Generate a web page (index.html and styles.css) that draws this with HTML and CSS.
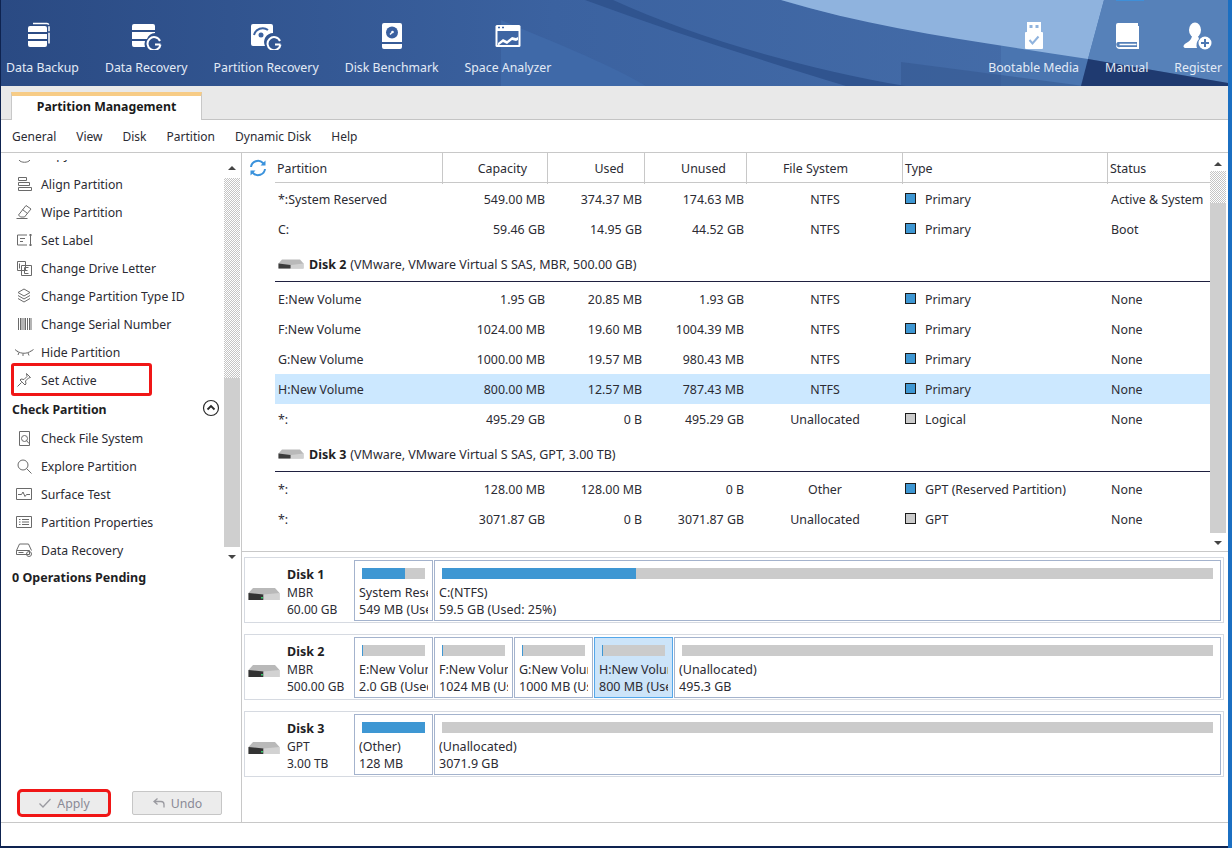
FILE: index.html
```html
<!DOCTYPE html>
<html lang="en">
<head>
<meta charset="utf-8">
<title>Partition Management</title>
<link rel="stylesheet" href="styles.css">
</head>
<body>
<div class="window">
  <header class="topbar">
    <svg class="topbar-bg" viewBox="0 0 1227 86" preserveAspectRatio="none" aria-hidden="true">
      <defs>
        <linearGradient id="hg" x1="0" y1="0" x2="1" y2="0">
          <stop offset="0" stop-color="#2a4a83"/>
          <stop offset="0.45" stop-color="#3b62a0"/>
          <stop offset="1" stop-color="#4870ab"/>
        </linearGradient>
      </defs>
      <rect width="1227" height="86" fill="url(#hg)"/>
      <path d="M500 20 C560 45 610 65 645 86 L500 86Z" fill="#3f69a8"/>
      <path d="M584 0 L612 0 C690 36 800 68 905 86 L845 86 C760 60 670 32 584 0Z" fill="#30548f"/>
      <path d="M780 0 L1105 0 L1080 86 L1000 86 L1000 42 C920 28 850 22 780 0Z" fill="#4a75b0"/>
      <path d="M780 0 L1103 0 L1087 59 C980 42 880 30 780 0Z" fill="#8fb3de"/>
      <path d="M900 62 L1083 86 L900 86Z" fill="#35578f" opacity=".55"/>
      <path d="M1103 0 L1227 0 L1227 83 L1087 59Z" fill="#5681b9"/>
      <path d="M1087 59 L1227 83 L1227 86 L1080 86Z" fill="#1f3a70"/>
      <rect x="1115" width="28" height="1" fill="#3f8fd8"/>
    </svg>
    <nav class="tools">
      <a class="tool">
        <svg class="tool-icon" viewBox="0 0 32 28"><path d="M7 1.500h14a2 2 0 0 1 2 2v18" fill="none" stroke="#fff" stroke-width="1.500" stroke-dasharray="16 1.500 5 1.500"/><path d="M4 4h15a2 2 0 0 1 2 2v4H2V6a2 2 0 0 1 2-2zM2 12h19v5H2zM2 19h19v4a2 2 0 0 1-2 2H4a2 2 0 0 1-2-2z" fill="#fff"/></svg>
        <span>Data Backup</span>
      </a>
      <a class="tool">
        <svg class="tool-icon" viewBox="0 0 32 28"><path d="M4 2h19a2 2 0 0 1 2 2v4H2V4a2 2 0 0 1 2-2zM2 10h23v1a9 9 0 0 0-8 6H2zM2 19h13a9 9 0 0 0 0 6H4a2 2 0 0 1-2-2z" fill="#fff"/><path d="M30 19a6.500 6.500 0 1 0 .5 3.500M25 22.500h5.500" fill="none" stroke="#fff" stroke-width="2"/></svg>
        <span>Data Recovery</span>
      </a>
      <a class="tool">
        <svg class="tool-icon" viewBox="0 0 32 28"><path d="M3 2h18a2 2 0 0 1 2 2v7a9 9 0 0 0-8 13H3a2 2 0 0 1-2-2V4a2 2 0 0 1 2-2z" fill="#fff"/><path d="M4 13a9 9 0 0 1 14-5" fill="none" stroke="#3c62a0" stroke-width="2"/><circle cx="11" cy="13" r="2.500" fill="#3c62a0"/><path d="M30 19a6.500 6.500 0 1 0 .5 3.500M25 22.500h5.500" fill="none" stroke="#fff" stroke-width="2"/></svg>
        <span>Partition Recovery</span>
      </a>
      <a class="tool">
        <svg class="tool-icon" viewBox="0 0 32 28"><path d="M8 1h16a2 2 0 0 1 2 2v17H6V3a2 2 0 0 1 2-2zM6 22h20v3a2 2 0 0 1-2 2H8a2 2 0 0 1-2-2z" fill="#fff"/><circle cx="16" cy="10.500" r="6" fill="#3a60a0"/><path d="M16 10.500l-2 2" stroke="#fff" stroke-width="1.500"/><circle cx="16.500" cy="10" r="1.300" fill="#fff"/></svg>
        <span>Disk Benchmark</span>
      </a>
      <a class="tool">
        <svg class="tool-icon" viewBox="0 0 32 28"><rect x="3.500" y="3" width="25" height="22" rx="1.500" fill="#fff"/><rect x="5.500" y="9" width="21" height="14" fill="#3e65a3"/><path d="M6 5.500h2M10 5.500h2" stroke="#3e65a3" stroke-width="1.500"/><path d="M6 21l5-4 4 2 5-4 4 1 2-1v3l-2 1-4-1-5 4-4-2-4 3H6z" fill="#fff"/></svg>
        <span>Space Analyzer</span>
      </a>
      <span class="tools-gap"></span>
      <a class="tool">
        <svg class="tool-icon" viewBox="0 0 32 28"><path d="M9 0h14v10h-14z" fill="#fff"/><rect x="11.500" y="3" width="3" height="3" fill="#8fb3de"/><rect x="17.500" y="3" width="3" height="3" fill="#8fb3de"/><path d="M8 10h16a1 1 0 0 1 1 1v15a1 1 0 0 1-1 1H8a1 1 0 0 1-1-1V11a1 1 0 0 1 1-1z" fill="#fff"/><path d="M11.500 18l3 3.500 6-7" fill="none" stroke="#8fb3de" stroke-width="2"/></svg>
        <span>Bootable Media</span>
      </a>
      <a class="tool">
        <svg class="tool-icon" viewBox="0 0 32 28"><path d="M7 1h20v3h1v23H9a4 4 0 0 1-4-4V3a2 2 0 0 1 2-2z" fill="#fff"/><path d="M7 20h19v5H9a2.500 2.500 0 0 1-2-5z" fill="#5681b9"/><path d="M8.500 22.500h17" stroke="#fff" stroke-width="1.500"/></svg>
        <span>Manual</span>
      </a>
      <a class="tool">
        <svg class="tool-icon" viewBox="0 0 32 28"><ellipse cx="13" cy="8" rx="6" ry="7.500" fill="#fff"/><path d="M10 14h6l1 3a9 9 0 0 0-2 9H3a2 2 0 0 1-1-3c2-3 7-3 8-9z" fill="#fff"/><circle cx="23" cy="21" r="6.500" fill="#fff"/><path d="M23 17v8M19 21h8" stroke="#4d78b2" stroke-width="2"/></svg>
        <span>Register</span>
      </a>
    </nav>
  </header>

  <div class="tabbar"><div class="tab">Partition Management</div></div>

  <nav class="menubar">
    <span>General</span><span>View</span><span>Disk</span><span>Partition</span><span>Dynamic Disk</span><span>Help</span>
  </nav>

  <div class="workspace">
    <aside class="sidebar">
      <div class="side-scroll">
        <div class="side-list">
          <div class="side-item side-item-first"><svg class="side-icon" viewBox="0 0 18 18"><path d="M4 14c2 3 9 3 11 0" class="ln"/></svg><span>Copy Partition</span></div>
          <div class="side-item"><svg class="side-icon" viewBox="0 0 18 18"><path d="M3.500 2.500h8v3h-8zM3.500 7.500h11v3h-11zM3.500 12.500h13v3h-13z" class="ln"/></svg><span>Align Partition</span></div>
          <div class="side-item"><svg class="side-icon" viewBox="0 0 18 18"><path d="M11 2.500l5 3.500-6.500 8H5.500l-2-2zM7.500 6.500l5 4M1.500 15.500h11" class="ln"/></svg><span>Wipe Partition</span></div>
          <div class="side-item"><svg class="side-icon" viewBox="0 0 18 18"><path d="M12 4H2.500v10H12M14 4h3M14 14h3M15.500 3v12M5 7.500h5M5 10.500h3" class="ln"/></svg><span>Set Label</span></div>
          <div class="side-item"><svg class="side-icon" viewBox="0 0 18 18"><path d="M2.500 2.500h8v9h-8zM6.500 6.500h10v10h-10z" class="ln" /><path d="M9.500 8.500h4M9.500 11.500h3M9.500 14.500h4M9.500 8.500v6M4.500 4.500v5" class="ln"/></svg><span>Change Drive Letter</span></div>
          <div class="side-item"><svg class="side-icon" viewBox="0 0 18 18"><path d="M9 2l6 3.500-6 3.500-6-3.500zM3 8.500l6 3.500 6-3.500M3 11.500l6 3.500 6-3.500" class="ln"/></svg><span>Change Partition Type ID</span></div>
          <div class="side-item"><svg class="side-icon" viewBox="0 0 18 18"><path d="M3.500 3v12M5.500 3v12M7 3v12M9 3v12M10.500 3v12M12.500 3v12M14.500 3v12M16 3v12" class="ln"/></svg><span>Change Serial Number</span></div>
          <div class="side-item"><svg class="side-icon side-icon-wide" viewBox="0 0 20 18"><path d="M3 8c4 3 10 3 14 0M1 6.500l3 2.500M5 9.500l-1 2.500M9 10.500v2.500M14 10l1 2.500M16.500 8.500l3-2" class="ln"/></svg><span>Hide Partition</span></div>
          <div class="side-item side-item-marked"><span class="red-mark"></span><svg class="side-icon" viewBox="0 0 18 18"><path d="M11.500 2.500l4 4-2 .5-3 3 .5 3-1 1-5-5 1-1 3 .5 3-3zM6.500 11.500l-4 4" class="ln"/></svg><span>Set Active</span></div>
          <div class="side-head"><span>Check Partition</span><svg class="chev" viewBox="0 0 18 18"><circle cx="9" cy="9" r="7.500" fill="none" stroke="#2a2a2a" stroke-width="1.200"/><path d="M5.500 10.500L9 7l3.500 3.500" fill="none" stroke="#2a2a2a" stroke-width="1.800"/></svg></div>
          <div class="side-item"><svg class="side-icon" viewBox="0 0 18 18"><path d="M4.500 2.500h10v14h-10z" class="ln"/><circle cx="9.500" cy="9.500" r="3" class="ln"/><path d="M11.500 11.500l2.500 3" class="ln"/></svg><span>Check File System</span></div>
          <div class="side-item"><svg class="side-icon" viewBox="0 0 18 18"><circle cx="8" cy="8" r="5" class="ln"/><path d="M11.500 11.500l5 5" class="ln"/></svg><span>Explore Partition</span></div>
          <div class="side-item"><svg class="side-icon" viewBox="0 0 18 18"><path d="M1.500 3.500h15v11h-15zM3 9.500h3.500l1.500-2.500 2 4.500 1.500-2h3.500" class="ln"/></svg><span>Surface Test</span></div>
          <div class="side-item"><svg class="side-icon" viewBox="0 0 18 18"><path d="M1.500 3.500h15v11h-15zM4 6.500h1.500M4 9h1.500M4 11.500h1.500M7 6.500h7M7 9h7M7 11.500h7" class="ln"/></svg><span>Partition Properties</span></div>
          <div class="side-item"><svg class="side-icon" viewBox="0 0 18 18"><path d="M1.500 9.500l3-6.500h9l3 6.500M1.500 9.500h13v4h-13zM3.500 11.500h5" class="ln"/><circle cx="14" cy="13" r="2.500" class="ln"/></svg><span>Data Recovery</span></div>
        </div>
        <div class="scrollbar scrollbar-side">
          <span class="arrow arrow-up"></span>
          <span class="hatch hatch-side"></span>
          <span class="thumb"></span>
          <span class="arrow arrow-down"></span>
        </div>
      </div>
      <div class="side-foot">0 Operations Pending</div>
      <div class="actions">
        <button class="action action-apply" type="button"><svg class="action-icon" viewBox="0 0 14 12"><path d="M1.500 6.500l3.500 3.500 7.500-8" fill="none" stroke="#9a9aa0" stroke-width="1.300"/></svg>Apply</button>
        <button class="action" type="button"><svg class="action-icon" viewBox="0 0 14 12"><path d="M5.500 1.500l-3.500 3 3.500 3M2 4.500h7a3 3 0 0 1 3 3v3" fill="none" stroke="#9a9aa0" stroke-width="1.300"/></svg>Undo</button>
      </div>
    </aside>

    <main class="content">
      <section class="table-area">
        <div class="refresh"><svg viewBox="0 0 18 18" class="refresh-icon"><path d="M2 8a7 7 0 0 1 12-4l1.500 1.500M16 10a7 7 0 0 1-12 4l-1.500-1.500" fill="none" stroke="#3a92dc" stroke-width="2"/><path d="M16.500 1.500v5h-5zM1.500 16.500v-5h5z" fill="#3a92dc"/></svg></div>
        <div class="table">
          <div class="row row-head">
            <div class="th">Partition</div><div class="th th-num">Capacity</div><div class="th th-num">Used</div><div class="th th-num">Unused</div><div class="th th-mid">File System</div><div class="th th-type">Type</div><div class="th th-status">Status</div>
          </div>
          <div class="row row-first"><div class="td td-name">*:System Reserved</div><div class="td num">549.00 MB</div><div class="td num">374.37 MB</div><div class="td num">174.63 MB</div><div class="td mid">NTFS</div><div class="td type"><i class="swatch"></i>Primary</div><div class="td status">Active &amp; System</div></div>
          <div class="row"><div class="td td-name">C:</div><div class="td num">59.46 GB</div><div class="td num">14.95 GB</div><div class="td num">44.52 GB</div><div class="td mid">NTFS</div><div class="td type"><i class="swatch"></i>Primary</div><div class="td status">Boot</div></div>
          <div class="disk-row"><svg class="hdd-small" viewBox="0 0 26 12"><path d="M4 1.500h18l3.500 4v5H.5v-5z" fill="#b9b9b9"/><path d="M.5 5.500l12 1.500v3.500H.5z" fill="#3c3c3c"/><path d="M13 7l12.500-1.500v5H13z" fill="#d0d0d0"/></svg><b>Disk 2</b><span>(VMware, VMware Virtual S SAS, MBR, 500.00 GB)</span></div>
          <div class="row"><div class="td td-name">E:New Volume</div><div class="td num">1.95 GB</div><div class="td num">20.85 MB</div><div class="td num">1.93 GB</div><div class="td mid">NTFS</div><div class="td type"><i class="swatch"></i>Primary</div><div class="td status">None</div></div>
          <div class="row"><div class="td td-name">F:New Volume</div><div class="td num">1024.00 MB</div><div class="td num">19.60 MB</div><div class="td num">1004.39 MB</div><div class="td mid">NTFS</div><div class="td type"><i class="swatch"></i>Primary</div><div class="td status">None</div></div>
          <div class="row"><div class="td td-name">G:New Volume</div><div class="td num">1000.00 MB</div><div class="td num">19.57 MB</div><div class="td num">980.43 MB</div><div class="td mid">NTFS</div><div class="td type"><i class="swatch"></i>Primary</div><div class="td status">None</div></div>
          <div class="row row-selected"><div class="td td-name">H:New Volume</div><div class="td num">800.00 MB</div><div class="td num">12.57 MB</div><div class="td num">787.43 MB</div><div class="td mid">NTFS</div><div class="td type"><i class="swatch"></i>Primary</div><div class="td status">None</div></div>
          <div class="row"><div class="td td-name">*:</div><div class="td num">495.29 GB</div><div class="td num">0 B</div><div class="td num">495.29 GB</div><div class="td mid">Unallocated</div><div class="td type"><i class="swatch swatch-gray"></i>Logical</div><div class="td status">None</div></div>
          <div class="disk-row"><svg class="hdd-small" viewBox="0 0 26 12"><path d="M4 1.500h18l3.500 4v5H.5v-5z" fill="#b9b9b9"/><path d="M.5 5.500l12 1.500v3.500H.5z" fill="#3c3c3c"/><path d="M13 7l12.500-1.500v5H13z" fill="#d0d0d0"/></svg><b>Disk 3</b><span>(VMware, VMware Virtual S SAS, GPT, 3.00 TB)</span></div>
          <div class="row"><div class="td td-name">*:</div><div class="td num">128.00 MB</div><div class="td num">128.00 MB</div><div class="td num">0 B</div><div class="td mid">Other</div><div class="td type"><i class="swatch"></i>GPT (Reserved Partition)</div><div class="td status">None</div></div>
          <div class="row"><div class="td td-name">*:</div><div class="td num">3071.87 GB</div><div class="td num">0 B</div><div class="td num">3071.87 GB</div><div class="td mid">Unallocated</div><div class="td type"><i class="swatch swatch-gray"></i>GPT</div><div class="td status">None</div></div>
        </div>
        <div class="scrollbar scrollbar-table">
          <span class="arrow arrow-up"></span>
          <span class="hatch hatch-table"></span>
          <span class="thumb"></span>
          <span class="arrow arrow-down"></span>
        </div>
      </section>

      <section class="map">
        <div class="disk-card">
          <div class="disk-info"><svg class="hdd" viewBox="0 0 32 14"><path d="M5 1h22l4.500 5v7H.5V6z" fill="#b9b9b9"/><path d="M.5 6l15 1.500V13H.5z" fill="#333"/><path d="M15.500 7.500L31.500 6v7h-16z" fill="#d2d2d2"/><rect x="13" y="10" width="2" height="1.500" fill="#35c46a"/></svg><div class="disk-text"><b>Disk 1</b><span>MBR</span><span>60.00 GB</span></div></div>
          <div class="part part-s"><div class="bar"><i class="fill fill-23"></i></div><p>System Reserved</p><p>549 MB (Used: 68%)</p></div>
          <div class="part part-grow part-c"><div class="bar"><i class="fill fill-25"></i></div><p>C:(NTFS)</p><p>59.5 GB (Used: 25%)</p></div>
        </div>
        <div class="disk-card">
          <div class="disk-info"><svg class="hdd" viewBox="0 0 32 14"><path d="M5 1h22l4.500 5v7H.5V6z" fill="#b9b9b9"/><path d="M.5 6l15 1.500V13H.5z" fill="#333"/><path d="M15.500 7.500L31.500 6v7h-16z" fill="#d2d2d2"/><rect x="13" y="10" width="2" height="1.500" fill="#35c46a"/></svg><div class="disk-text"><b>Disk 2</b><span>MBR</span><span>500.00 GB</span></div></div>
          <div class="part part-s"><div class="bar"><i class="fill fill-1"></i></div><p>E:New Volume</p><p>2.0 GB (Used: 1%)</p></div>
          <div class="part part-s"><div class="bar"><i class="fill fill-1"></i></div><p>F:New Volume</p><p>1024 MB (Used: 1%)</p></div>
          <div class="part part-s"><div class="bar"><i class="fill fill-1"></i></div><p>G:New Volume</p><p>1000 MB (Used: 1%)</p></div>
          <div class="part part-s part-on"><div class="bar"><i class="fill fill-1"></i></div><p>H:New Volume</p><p>800 MB (Used: 1%)</p></div>
          <div class="part part-grow part-c"><div class="bar"></div><p>(Unallocated)</p><p>495.3 GB</p></div>
        </div>
        <div class="disk-card">
          <div class="disk-info"><svg class="hdd" viewBox="0 0 32 14"><path d="M5 1h22l4.500 5v7H.5V6z" fill="#b9b9b9"/><path d="M.5 6l15 1.500V13H.5z" fill="#333"/><path d="M15.500 7.500L31.500 6v7h-16z" fill="#d2d2d2"/><rect x="13" y="10" width="2" height="1.500" fill="#35c46a"/></svg><div class="disk-text"><b>Disk 3</b><span>GPT</span><span>3.00 TB</span></div></div>
          <div class="part part-s"><div class="bar"><i class="fill fill-full"></i></div><p>(Other)</p><p>128 MB</p></div>
          <div class="part part-grow part-c"><div class="bar"></div><p>(Unallocated)</p><p>3071.9 GB</p></div>
        </div>
      </section>
    </main>
  </div>
  <div class="statusbar"></div>
</div>
</body>
</html>
```

FILE: styles.css
```css
* { box-sizing: border-box; }
html, body { margin: 0; padding: 0; height: 100%; }
body {
  background: #1b6fc2;
  font-family: "Noto Sans", "Open Sans", sans-serif;
  font-size: 12px;
  color: #2b2b33;
  overflow: hidden;
}
.window {
  width: 1228px;
  height: 848px;
  background: #fff;
  border-left: 1px solid #0e2350;
  border-bottom: 2px solid #0e2350;
  display: flex;
  flex-direction: column;
}

/* top toolbar */
.topbar { position: relative; height: 86px; flex: none; overflow: hidden; }
.topbar-bg { position: absolute; inset: 0; width: 100%; height: 100%; display: block; }
.tools {
  position: relative;
  display: flex;
  height: 100%;
  padding: 22px 6px 0 5px;
  gap: 26px;
}
.tools-gap { flex: 1; margin-right: -26px; }
.tool {
  display: flex;
  flex-direction: column;
  align-items: center;
  color: #e3ebf6;
  font-size: 12.300px;
  line-height: 18px;
  white-space: nowrap;
}
.tool-icon { width: 32px; height: 28px; display: block; margin-bottom: 9px; }

/* tabs + menu */
.tabbar {
  height: 34px;
  flex: none;
  background: #e9e9e9;
  border-bottom: 1px solid #c4c4c4;
  padding: 6px 0 0 10px;
}
.tab {
  width: 191px;
  height: 28px;
  background: #fff;
  border: 1px solid #c8c8c8;
  border-top: 4px solid #f7cc86;
  border-bottom: 0;
  font-weight: 700;
  font-size: 12.300px;
  line-height: 21px;
  text-align: center;
  color: #1a1a1a;
}
.menubar {
  height: 33px;
  flex: none;
  display: flex;
  gap: 20px;
  padding-left: 11px;
  align-items: center;
  border-bottom: 1px solid #c8c8c8;
  font-size: 12px;
}

/* workspace */
.workspace { height: 669px; flex: none; display: flex; }
.sidebar {
  width: 241px;
  flex: none;
  border-right: 1px solid #c8c8c8;
  display: flex;
  flex-direction: column;
  padding-top: 7px;
}
.side-scroll { height: 405px; flex: none; display: flex; }
.side-list { flex: 1; overflow: hidden; min-width: 0; }
.side-item {
  position: relative;
  height: 28px;
  display: flex;
  align-items: center;
  padding-left: 14px;
  font-size: 12.250px;
  white-space: nowrap;
}
.side-item-first { margin-top: -21px; height: 31px; }
.side-icon { width: 18px; height: 18px; flex: none; margin-right: 8px; }
.side-icon-wide { width: 20px; margin-left: -1px; margin-right: 7px; }
.ln { fill: none; stroke: #6a6a6a; stroke-width: 1; }
.red-mark {
  position: absolute;
  left: 10px;
  top: -3px;
  width: 141px;
  height: 33px;
  border: 3px solid #f01616;
  border-radius: 3px;
}
.side-head {
  height: 30px;
  display: flex;
  align-items: center;
  justify-content: space-between;
  padding: 0 4px 0 11px;
  font-weight: 700;
  font-size: 12.300px;
  color: #1e1e24;
}
.chev { width: 18px; height: 18px; margin-top: -2px; }
.side-foot {
  height: 26px;
  padding-left: 11px;
  line-height: 26px;
  font-weight: 700;
  font-size: 12.500px;
  color: #1e1e24;
}
.actions {
  margin-top: auto;
  padding: 0 19px 7px 18px;
  display: flex;
  justify-content: space-between;
}
.action {
  width: 90px;
  height: 24px;
  border: 1px solid #c6c6c6;
  border-radius: 2px;
  background: #ececec;
  color: #8a8a96;
  font: inherit;
  font-size: 12.300px;
  display: flex;
  align-items: center;
  justify-content: center;
  gap: 5px;
  padding: 0;
}
.action-apply { outline: 3px solid #f01616; outline-offset: -1px; border-radius: 3px; }
.action-icon { width: 14px; height: 12px; }

/* scrollbars */
.scrollbar {
  width: 16px;
  flex: none;
  display: flex;
  flex-direction: column;
  align-items: stretch;
}
.scrollbar-side { margin-right: 1px; }
.scrollbar-table { margin-right: 2px; padding-top: 3px; }
.arrow { height: 16px; flex: none; position: relative; display: block; }
.arrow::after {
  content: "";
  position: absolute;
  left: 4px;
  border-left: 4px solid transparent;
  border-right: 4px solid transparent;
}
.arrow-up::after { top: 6px; border-bottom: 4px solid #444; }
.arrow-down::after { bottom: 6px; border-top: 4px solid #444; }
.hatch {
  flex: none;
  display: block;
  background: repeating-conic-gradient(#c4c4c4 0 25%, #fff 0 50%) 0 0 / 2px 2px;
}
.hatch-side { height: 200px; margin-top: 2px; }
.hatch-table { height: 32px; }
.thumb { flex: 1; background: #cfcfcf; display: block; }
.scrollbar-table .arrow-up { height: 15px; }
.scrollbar-table .arrow-down { height: 18px; }
.scrollbar-side .arrow-down { height: 18px; }

/* partition table */
.content { flex: 1; min-width: 0; display: flex; flex-direction: column; }
.table-area {
  height: 399px;
  flex: none;
  display: flex;
  border-bottom: 1px solid #c8c8c8;
}
.refresh { width: 33px; flex: none; padding: 6px 0 0 7px; }
.refresh-icon { width: 18px; height: 18px; display: block; }
.table { flex: 1; min-width: 0; }
.row {
  display: grid;
  grid-template-columns: 168px 105px 97px 102px 156px 205px 1fr;
  height: 30px;
  align-items: center;
  font-size: 12.400px;
  white-space: nowrap;
}
.row-head {
  height: 30px;
  align-items: stretch;
  border-bottom: 1px solid #c8c8c8;
}
.th {
  border-right: 1px solid #c8c8c8;
  line-height: 31px;
  padding-left: 2px;
}
.th-num { text-align: right; padding-right: 20px; }
.th-mid { text-align: center; padding-right: 20px; }
.th-type { padding-left: 2px; }
.th-status { border-right: 0; padding-left: 2px; }
.row-first { margin-top: 1px; }
.row-selected { background: #cce8ff; }
.td-name { padding-left: 3px; }
.num { text-align: right; padding-right: 3px; }
.mid { text-align: center; }
.type { padding-left: 2px; display: flex; align-items: center; }
.status { padding-left: 3px; }
.swatch {
  width: 11px;
  height: 11px;
  background: #3e97d3;
  border: 1px solid #1c1c1c;
  margin-right: 9px;
  margin-top: -2px;
  flex: none;
}
.swatch-gray { background: #cbcbcb; }
.disk-row {
  height: 38px;
  margin-bottom: 2px;
  display: flex;
  align-items: center;
  border-bottom: 1px solid #1f2040;
  padding: 3px 0 0 3px;
  font-size: 12.500px;
  white-space: nowrap;
}
.disk-row b { font-size: 12.500px; margin-right: 4px; color: #1e1e24; }
.hdd-small { width: 26px; height: 12px; margin-right: 5px; flex: none; }

/* disk map */
.map {
  flex: 1;
  padding: 5px 4px 0 2px;
  display: flex;
  flex-direction: column;
  gap: 11px;
}
.disk-card {
  height: 66px;
  border: 1px solid #d6dae1;
  padding: 2px 2px 2px 0;
  display: flex;
  gap: 1px;
}
.disk-info { width: 108px; flex: none; display: flex; align-items: center; padding: 0 0 0 3px; }
.hdd { width: 32px; height: 14px; margin: 7px 7px 0 0; flex: none; }
.disk-text { display: flex; flex-direction: column; font-size: 12px; line-height: 17px; white-space: nowrap; margin-top: 3px; }
.disk-text b { font-size: 12.500px; color: #1e1e24; line-height: 18px; }
.part {
  border: 1px solid #a4b3cd;
  padding: 7px 4px 0 4px;
  white-space: nowrap;
  height: 61px;
}
.part p { margin: 0; line-height: 17px; font-size: 12.500px; overflow: hidden; }
.part-s { width: 79px; flex: none; }
.part-grow { flex: 1; min-width: 0; }
.part-on { background: #cce4f9; border-color: #54a7ea; }
.bar {
  height: 11px;
  margin: 0 3px 5px 3px;
  background: #cbcbcb;
  display: flex;
}
.part-c .bar { margin-right: 3px; margin-left: 3px; }
.fill { display: block; height: 100%; background: #3e97d3; }
.fill-1 { width: 1px; }
.fill-23 { width: 43px; }
.fill-25 { width: 25.200%; }
.fill-full { width: 100%; }
.statusbar { flex: 1; border-top: 1px solid #c8c8c8; }
```
